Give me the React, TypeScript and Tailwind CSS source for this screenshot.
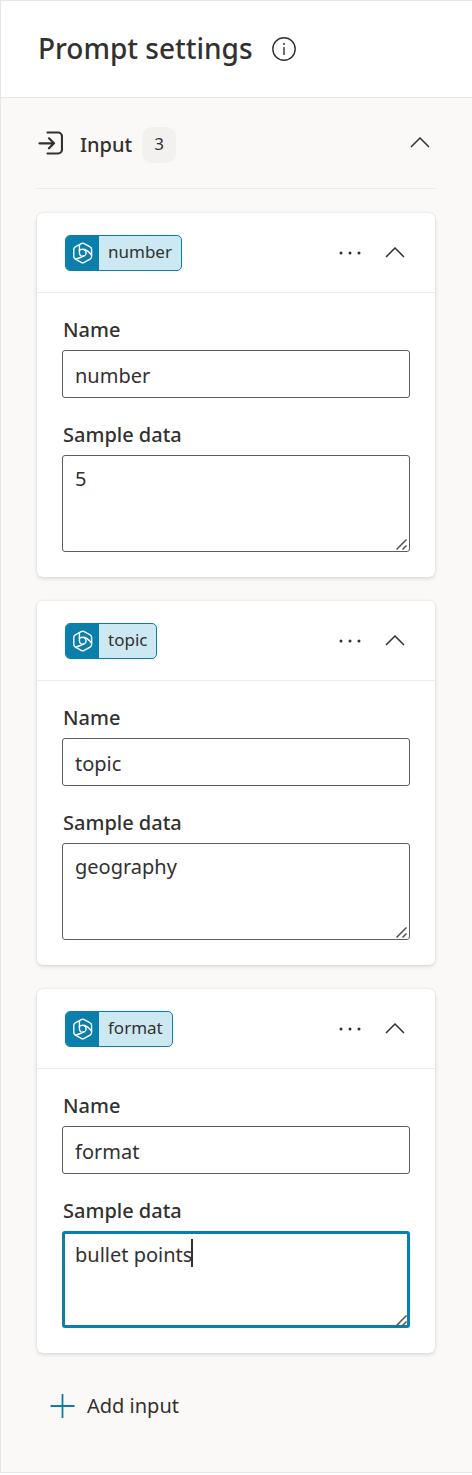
import { useState } from "react";

type Item = { id: string; name: string; sample: string; active?: boolean };

const items: Item[] = [
  { id: "number", name: "number", sample: "5" },
  { id: "topic", name: "topic", sample: "geography" },
  { id: "format", name: "format", sample: "bullet points", active: true },
];

function Chevron() {
  return (
    <svg width="20" height="12" viewBox="0 0 20 12" fill="none" stroke="currentColor" strokeWidth="1.5" aria-hidden="true">
      <path d="M1 10 10 1l9 9" />
    </svg>
  );
}

function PromptLogo() {
  return (
    <svg width="22" height="22" viewBox="0 0 22 22" fill="none" stroke="white" strokeWidth="1.4" strokeLinejoin="round" strokeLinecap="round" aria-hidden="true">
      <path d="M9.2 1.600a3 3 0 0 1 3 0l5.900 3.300a3 3 0 0 1 1.500 2.600v7a3 3 0 0 1-1.500 2.600l-5.900 3.300a3 3 0 0 1-3 0l-5.900-3.300a3 3 0 0 1-1.500-2.600v-7a3 3 0 0 1 1.500-2.600Z" />
      <path d="M7.400 2.800v8.200a3.200 3.200 0 0 0 4.600 2.900" />
      <path d="M7.400 8.200c2-1 5-1.200 7.300.2 2 1.200 3.400 2.700 4.800 4.800" />
      <path d="M12.200 7.800a3.300 3.300 0 0 1-.2 6.100C9 15.500 6.500 16.600 3.500 17" />
    </svg>
  );
}

function Grip() {
  return (
    <svg className="pointer-events-none absolute right-[3px] bottom-[2px]" width="11" height="11" viewBox="0 0 11 11" fill="none" stroke="#505050" strokeWidth="1.5" aria-hidden="true">
      <path d="M.5 10.500 10.500.5M6.500 10.500l4-4" />
    </svg>
  );
}

function InputCard({ item }: { item: Item }) {
  const [name, setName] = useState(item.name);
  const [sample, setSample] = useState(item.sample);
  return (
    <section className="rounded-md bg-white shadow-[0_2px_4px_rgba(0,0,0,0.10),0_0_3px_rgba(0,0,0,0.10)]">
      <header className="flex h-20 items-center border-b border-[#edebe9] pr-[30px] pl-7">
        <span className="flex h-9 items-center overflow-hidden rounded-[5px] border border-[#0b7fab] bg-[#cce8f2]">
          <span className="flex h-9 w-[33px] items-center justify-center bg-[#0b7fab]">
            <PromptLogo />
          </span>
          <span className="px-[9px] pb-[2px] text-[17px] leading-6">{item.name}</span>
        </span>
        <button type="button" aria-label="More options" className="ml-auto flex h-8 w-8 items-center justify-center">
          <svg width="24" height="4" viewBox="0 0 24 4" fill="currentColor" aria-hidden="true">
            <circle cx="4" cy="2" r="1.500" />
            <circle cx="13" cy="2" r="1.500" />
            <circle cx="22" cy="2" r="1.500" />
          </svg>
        </button>
        <button type="button" aria-label="Collapse" className="ml-5 flex h-8 w-5 items-center justify-center">
          <Chevron />
        </button>
      </header>
      <div className="flex flex-col px-[25px] pt-[22px] pb-[25px]">
        <label htmlFor={item.id + "-name"} className="mb-[5px] pl-px text-xl leading-[30px] font-medium">
          Name
        </label>
        <input
          id={item.id + "-name"}
          value={name}
          onChange={(e) => setName(e.target.value)}
          className="mb-[22px] h-12 w-full rounded-[3px] border border-[#605e5c] bg-white px-3 pt-[3px] text-xl outline-none"
        />
        <label htmlFor={item.id + "-sample"} className="mb-[5px] pl-px text-xl leading-[30px] font-medium">
          Sample data
        </label>
        <div className="relative flex">
          <textarea
            id={item.id + "-sample"}
            value={sample}
            onChange={(e) => setSample(e.target.value)}
            className={
              item.active
                ? "h-[97px] w-full resize-none rounded-[3px] border-3 border-[#0b7fab] bg-white px-2.5 py-[6px] text-xl leading-[30px] caret-transparent outline-none"
                : "h-[97px] w-full resize-none rounded-[3px] border border-[#605e5c] bg-white px-3 py-2 text-xl leading-[30px] outline-none"
            }
          />
          {item.active && <span className="absolute top-2 left-[129px] h-7 w-0.5 bg-[#323130]" />}
          <Grip />
        </div>
      </div>
    </section>
  );
}

export default function App() {
  return (
    <main className="border-y border-l border-[#e6e6e6] bg-[#faf9f8] font-['Noto_Sans','Open_Sans',sans-serif] text-[#323130]">
      <header className="flex h-[97px] items-center gap-[19px] border-b border-[#e5e4e3] bg-white pl-[37px]">
        <h1 className="pb-[2px] text-[28px] leading-9 font-medium">Prompt settings</h1>
        <button type="button" aria-label="About prompt settings">
          <svg width="24" height="24" viewBox="0 0 24 24" fill="none" stroke="currentColor" strokeWidth="1.400" aria-hidden="true">
            <circle cx="12" cy="12" r="11.200" />
            <path d="M12 10v8" />
            <circle cx="12" cy="7" r="1" fill="currentColor" stroke="none" />
          </svg>
        </button>
      </header>
      <div className="pr-[37px] pb-[50px] pl-9">
        <div className="mb-6 flex h-[91px] items-center border-b border-[#edebe9] pr-[5px]">
          <svg width="26" height="24" viewBox="0 0 26 24" fill="none" stroke="currentColor" strokeWidth="2.200" strokeLinecap="round" strokeLinejoin="round" aria-hidden="true">
            <path d="M10.500 1.500H21a4 4 0 0 1 4 4v13a4 4 0 0 1-4 4H10.500M2.500 12.300H17M12 7.300l5 5-5 5" />
          </svg>
          <div className="flex items-center gap-2.5 pt-[3px] pl-[17px]">
            <h2 className="text-xl leading-[30px] font-medium">Input</h2>
            <span className="flex h-9 w-[34px] items-center justify-center rounded-[10px] bg-[#f2f1f0] pb-[2px] text-[17px]">3</span>
          </div>
          <button type="button" aria-label="Collapse inputs" className="ml-auto flex h-8 w-5 items-center justify-center">
            <Chevron />
          </button>
        </div>
        <div className="flex flex-col gap-6">
          {items.map((item) => (
            <InputCard key={item.id} item={item} />
          ))}
        </div>
        <button type="button" className="mt-[37px] ml-[13px] flex items-center gap-3 text-xl leading-8">
          <svg width="25" height="24" viewBox="0 0 25 24" fill="none" stroke="#0b7fab" strokeWidth="1.800" aria-hidden="true">
            <path d="M.5 12h24M12.500 0v24" />
          </svg>
          Add input
        </button>
      </div>
    </main>
  );
}
